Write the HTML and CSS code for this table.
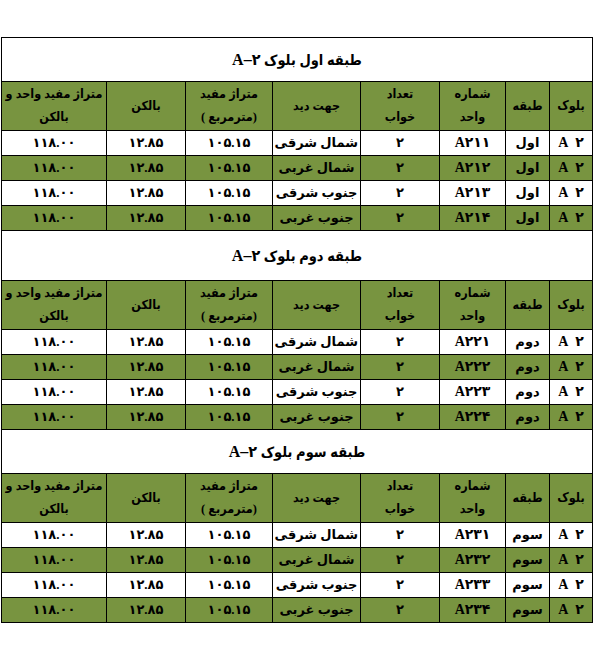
FILE: index.html
```html
<!DOCTYPE html>
<html lang="fa" dir="rtl">
<head>
<meta charset="utf-8">
<title>جدول واحدها</title>
<link rel="stylesheet" href="styles.css">
</head>
<body>
<table class="units">
<colgroup>
<col class="c-block"><col class="c-floor"><col class="c-unit"><col class="c-bed"><col class="c-view"><col class="c-area"><col class="c-balc"><col class="c-total">
</colgroup>
<tbody>
<tr class="title"><td colspan="8">طبقه اول بلوک <span class="ltr">A–۲</span></td></tr>
<tr class="head"><td>بلوک</td><td>طبقه</td><td>شماره<br>واحد</td><td>تعداد<br>خواب</td><td>جهت دید</td><td>متراژ مفید<br>(مترمربع )</td><td>بالکن</td><td>متراژ مفید واحد و<br>بالکن</td></tr>
<tr class="row"><td class="lat">A&nbsp;&nbsp;۲</td><td>اول</td><td class="lat">A۲۱۱</td><td>۲</td><td>شمال شرقی</td><td>۱۰۵.۱۵</td><td>۱۲.۸۵</td><td>۱۱۸.۰۰</td></tr>
<tr class="row alt"><td class="lat">A&nbsp;&nbsp;۲</td><td>اول</td><td class="lat">A۲۱۲</td><td>۲</td><td>شمال غربی</td><td>۱۰۵.۱۵</td><td>۱۲.۸۵</td><td>۱۱۸.۰۰</td></tr>
<tr class="row"><td class="lat">A&nbsp;&nbsp;۲</td><td>اول</td><td class="lat">A۲۱۳</td><td>۲</td><td>جنوب شرقی</td><td>۱۰۵.۱۵</td><td>۱۲.۸۵</td><td>۱۱۸.۰۰</td></tr>
<tr class="row alt"><td class="lat">A&nbsp;&nbsp;۲</td><td>اول</td><td class="lat">A۲۱۴</td><td>۲</td><td>جنوب غربی</td><td>۱۰۵.۱۵</td><td>۱۲.۸۵</td><td>۱۱۸.۰۰</td></tr>

<tr class="title tall"><td colspan="8">طبقه دوم بلوک <span class="ltr">A–۲</span></td></tr>
<tr class="head"><td>بلوک</td><td>طبقه</td><td>شماره<br>واحد</td><td>تعداد<br>خواب</td><td>جهت دید</td><td>متراژ مفید<br>(مترمربع )</td><td>بالکن</td><td>متراژ مفید واحد و<br>بالکن</td></tr>
<tr class="row"><td class="lat">A&nbsp;&nbsp;۲</td><td>دوم</td><td class="lat">A۲۲۱</td><td>۲</td><td>شمال شرقی</td><td>۱۰۵.۱۵</td><td>۱۲.۸۵</td><td>۱۱۸.۰۰</td></tr>
<tr class="row alt"><td class="lat">A&nbsp;&nbsp;۲</td><td>دوم</td><td class="lat">A۲۲۲</td><td>۲</td><td>شمال غربی</td><td>۱۰۵.۱۵</td><td>۱۲.۸۵</td><td>۱۱۸.۰۰</td></tr>
<tr class="row"><td class="lat">A&nbsp;&nbsp;۲</td><td>دوم</td><td class="lat">A۲۲۳</td><td>۲</td><td>جنوب شرقی</td><td>۱۰۵.۱۵</td><td>۱۲.۸۵</td><td>۱۱۸.۰۰</td></tr>
<tr class="row alt"><td class="lat">A&nbsp;&nbsp;۲</td><td>دوم</td><td class="lat">A۲۲۴</td><td>۲</td><td>جنوب غربی</td><td>۱۰۵.۱۵</td><td>۱۲.۸۵</td><td>۱۱۸.۰۰</td></tr>

<tr class="title"><td colspan="8">طبقه سوم بلوک <span class="ltr">A–۲</span></td></tr>
<tr class="head"><td>بلوک</td><td>طبقه</td><td>شماره<br>واحد</td><td>تعداد<br>خواب</td><td>جهت دید</td><td>متراژ مفید<br>(مترمربع )</td><td>بالکن</td><td>متراژ مفید واحد و<br>بالکن</td></tr>
<tr class="row"><td class="lat">A&nbsp;&nbsp;۲</td><td>سوم</td><td class="lat">A۲۳۱</td><td>۲</td><td>شمال شرقی</td><td>۱۰۵.۱۵</td><td>۱۲.۸۵</td><td>۱۱۸.۰۰</td></tr>
<tr class="row alt"><td class="lat">A&nbsp;&nbsp;۲</td><td>سوم</td><td class="lat">A۲۳۲</td><td>۲</td><td>شمال غربی</td><td>۱۰۵.۱۵</td><td>۱۲.۸۵</td><td>۱۱۸.۰۰</td></tr>
<tr class="row"><td class="lat">A&nbsp;&nbsp;۲</td><td>سوم</td><td class="lat">A۲۳۳</td><td>۲</td><td>جنوب شرقی</td><td>۱۰۵.۱۵</td><td>۱۲.۸۵</td><td>۱۱۸.۰۰</td></tr>
<tr class="row alt"><td class="lat">A&nbsp;&nbsp;۲</td><td>سوم</td><td class="lat">A۲۳۴</td><td>۲</td><td>جنوب غربی</td><td>۱۰۵.۱۵</td><td>۱۲.۸۵</td><td>۱۱۸.۰۰</td></tr>
</tbody>
</table>
</body>
</html>
```
FILE: styles.css
```css
html, body {
  margin: 0;
  padding: 0;
  background: #ffffff;
}
body {
  padding: 37px 4px 0 2px;
  font-family: "Liberation Serif", "DejaVu Sans", serif;
  color: #000;
}
.units {
  width: 591px;
  border-collapse: collapse;
  table-layout: fixed;
  font-weight: bold;
}
.c-block { width: 43px; }
.c-floor { width: 44px; }
.c-unit { width: 66px; }
.c-bed { width: 79px; }
.c-view { width: 88px; }
.c-area { width: 87px; }
.c-balc { width: 79px; }
.c-total { width: 105px; }
.units td {
  border: 1px solid #000;
  padding: 0 2px;
  text-align: center;
  vertical-align: middle;
  overflow: hidden;
  white-space: nowrap;
}
.ltr {
  direction: ltr;
  unicode-bidi: isolate;
}
.title td {
  height: 43px;
  font-family: "Liberation Serif", "DejaVu Sans Condensed", "DejaVu Sans", serif;
  font-stretch: condensed;
  font-size: 14.5px;
  background: #fff;
}
.title .ltr { font-size: 16px; }
.title.tall td { height: 49px; }
.head td {
  height: 48px;
  font-family: "Liberation Serif", "DejaVu Sans Condensed", "DejaVu Sans", serif;
  font-stretch: condensed;
  font-size: 12.5px;
  line-height: 23px;
  background: #789440;
}
.row td {
  height: 24px;
  font-size: 13px;
  line-height: 18px;
  background: #fff;
}
.row.alt td { background: #789440; }
.row td.lat {
  font-size: 14px;
  direction: ltr;
}
```
